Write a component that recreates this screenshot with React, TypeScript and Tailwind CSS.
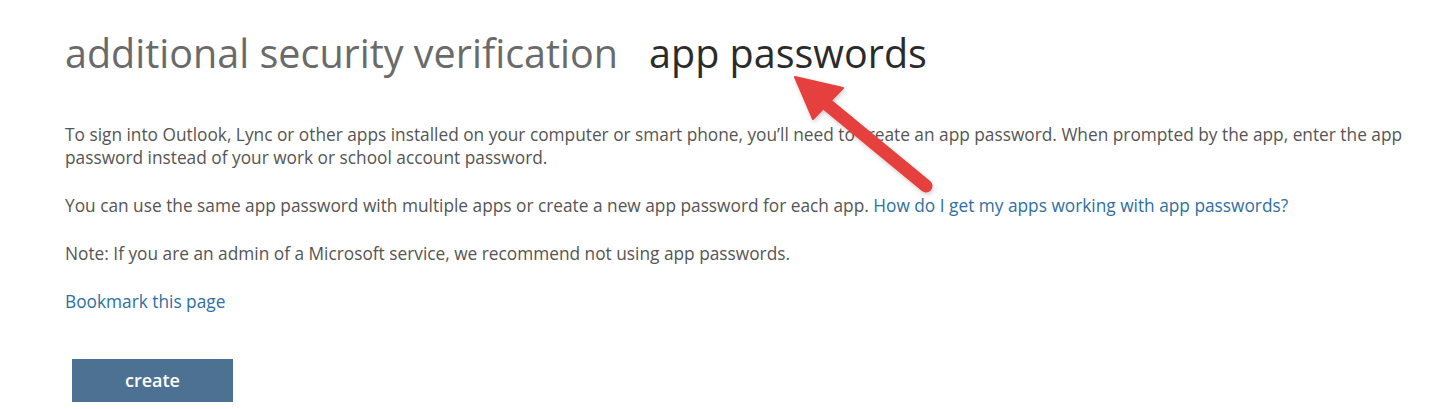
import React from "react";

function Arrow() {
  return (
    <svg
      className="pointer-events-none absolute left-[780px] top-[72px]"
      width="170"
      height="130"
      viewBox="0 0 170 130"
    >
      <defs>
        <filter id="sh" x="-20%" y="-20%" width="140%" height="140%">
          <feDropShadow dx="1" dy="2" stdDeviation="2" floodColor="#000" floodOpacity="0.2" />
        </filter>
      </defs>
      <g filter="url(#sh)">
        <line x1="146" y1="114" x2="44" y2="30" stroke="#e5403e" strokeWidth="13" strokeLinecap="round" />
        <polygon points="15,5 63,16 33,47" fill="#e5403e" strokeLinejoin="round" stroke="#e5403e" strokeWidth="2" />
      </g>
    </svg>
  );
}

export default function App() {
  return (
    <div
      className="relative h-[409px] w-[1446px] overflow-hidden bg-white text-[#555]"
      style={{ fontFamily: '"Open Sans", "Noto Sans", sans-serif' }}
    >
      <div className="flex flex-col pl-[65px] pr-[20px] pt-[26px]">
        <h1 className="flex gap-[31px] text-[39.5px] font-normal leading-[54px]">
          <span className="text-[#6a6a6a]">additional security verification</span>
          <span className="text-[#2b2b2b]">app passwords</span>
        </h1>

        <div className="mt-[43px] flex flex-col gap-[25px] text-[17.3px] leading-[23px]">
          <p>
            To sign into Outlook, Lync or other apps installed on your computer or smart phone, you’ll need to create an app
            password. When prompted by the app, enter the app password instead of your work or school account password.
          </p>
          <p>
            You can use the same app password with multiple apps or create a new app password for each app.{" "}
            <a className="text-[#2e6fa3]">How do I get my apps working with app passwords?</a>
          </p>
          <p>Note: If you are an admin of a Microsoft service, we recommend not using app passwords.</p>
          <p>
            <a className="text-[#2e6fa3]">Bookmark this page</a>
          </p>
        </div>

        <div className="mt-[46px] pl-[7px]">
          <button className="h-[43px] w-[161px] bg-[#4d7193] text-[18px] font-semibold text-white">create</button>
        </div>
      </div>
      <Arrow />
    </div>
  );
}
